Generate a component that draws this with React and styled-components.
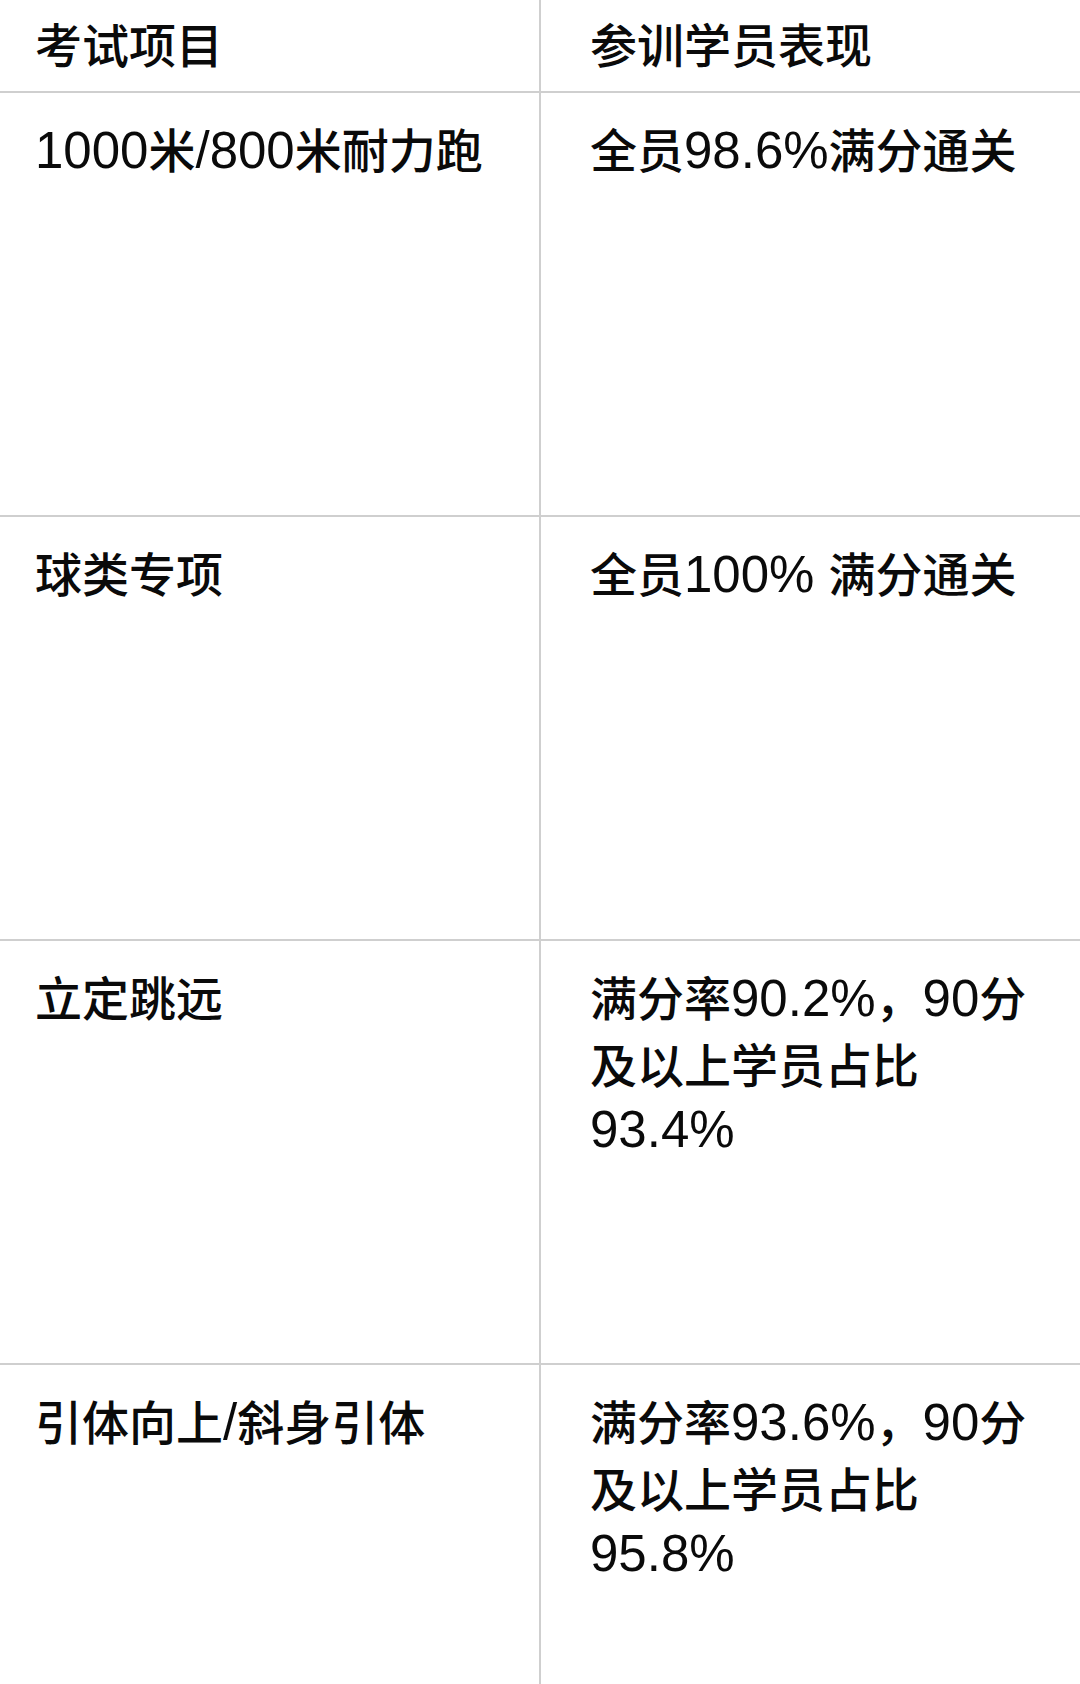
import React from "react";
import styled, { createGlobalStyle } from "styled-components";

const Global = createGlobalStyle`
  html, body { margin: 0; padding: 0; background: #ffffff; }
  body {
    font-family: "Noto Sans CJK SC", "Noto Sans", sans-serif;
    color: #111111;
  }
`;

const Page = styled.div`
  width: 1080px;
  height: 1684px;
  overflow: hidden;
  display: flex;
  flex-direction: column;
  background: #ffffff;
`;

const Row = styled.div`
  display: grid;
  grid-template-columns: 541px 1fr;
  flex: ${(p) => (p.$last ? "1 1 auto" : "0 0 auto")};
  height: ${(p) => (p.$last ? "auto" : `${p.$h}px`)};
  border-bottom: ${(p) => (p.$last ? "none" : "2px solid #cfcfcf")};
  box-sizing: border-box;
`;

const Cell = styled.div`
  box-sizing: border-box;
  padding: ${(p) => (p.$head ? "0 28px 6px" : "23px 28px 0")};
  padding-left: ${(p) => (p.$right ? "49px" : "35px")};
  border-right: ${(p) => (p.$right ? "none" : "2px solid #cfcfcf")};
  display: flex;
  flex-direction: column;
  justify-content: ${(p) => (p.$head ? "center" : "flex-start")};
  font-family: "Noto Sans CJK SC", sans-serif;
  font-size: 47px;
  line-height: 64px;
  font-weight: 500;
  color: #0a0a0a;
  white-space: nowrap;
`;

const Line = styled.span`
  display: block;
`;

const Num = styled.span`
  font-family: "Liberation Sans", Arial, sans-serif;
  font-size: 51px;
  line-height: 64px;
  font-weight: 400;
`;

function Rich({ text }) {
  const parts = text.split(/([0-9.%/]+\s?)/);
  return (
    <>
      {parts.map((p, i) =>
        /[0-9.%/]/.test(p) ? <Num key={i}>{p}</Num> : <React.Fragment key={i}>{p}</React.Fragment>
      )}
    </>
  );
}

const rows = [
  { item: "1000米/800米耐力跑", result: ["全员98.6%满分通关"] },
  { item: "球类专项", result: ["全员100% 满分通关"] },
  {
    item: "立定跳远",
    result: ["满分率90.2%，90分", "及以上学员占比", "93.4%"],
  },
  {
    item: "引体向上/斜身引体",
    result: ["满分率93.6%，90分", "及以上学员占比", "95.8%"],
  },
];

export default function App() {
  return (
    <>
      <Global />
      <Page>
        <Row $h={93}>
          <Cell $head>考试项目</Cell>
          <Cell $head $right>
            参训学员表现
          </Cell>
        </Row>
        {rows.map((r, i) => (
          <Row key={r.item} $h={424} $last={i === rows.length - 1}>
            <Cell>
              <Line>
                <Rich text={r.item} />
              </Line>
            </Cell>
            <Cell $right>
              {r.result.map((l) => (
                <Line key={l}>
                  <Rich text={l} />
                </Line>
              ))}
            </Cell>
          </Row>
        ))}
      </Page>
    </>
  );
}
